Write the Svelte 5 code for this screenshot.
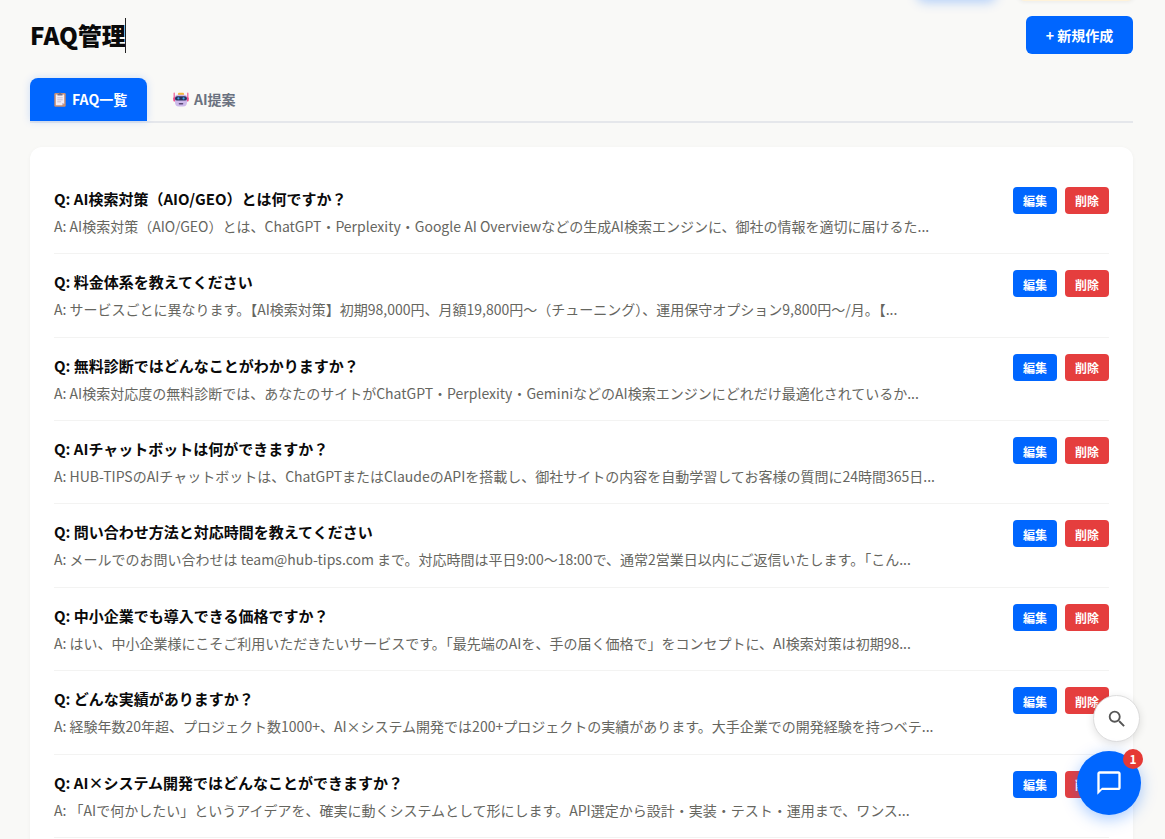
<script lang="ts">
  type Faq = {
    question: string;
    answer: string;
  };

  // State
  let activeTab = $state('list');

  const faqs: Faq[] = [
    {
      question: 'AI検索対策（AIO/GEO）とは何ですか？',
      answer: 'AI検索対策（AIO/GEO）とは、ChatGPT・Perplexity・Google AI Overviewなどの生成AI検索エンジンに、御社の情報を適切に届けるた...'
    },
    {
      question: '料金体系を教えてください',
      answer: 'サービスごとに異なります。【AI検索対策】初期98,000円、月額19,800円〜（チューニング）、運用保守オプション9,800円〜/月。【...'
    },
    {
      question: '無料診断ではどんなことがわかりますか？',
      answer: 'AI検索対応度の無料診断では、あなたのサイトがChatGPT・Perplexity・GeminiなどのAI検索エンジンにどれだけ最適化されているか...'
    },
    {
      question: 'AIチャットボットは何ができますか？',
      answer: 'HUB-TIPSのAIチャットボットは、ChatGPTまたはClaudeのAPIを搭載し、御社サイトの内容を自動学習してお客様の質問に24時間365日...'
    },
    {
      question: '問い合わせ方法と対応時間を教えてください',
      answer: 'メールでのお問い合わせは team@hub-tips.com まで。対応時間は平日9:00〜18:00で、通常2営業日以内にご返信いたします。「こん...'
    },
    {
      question: '中小企業でも導入できる価格ですか？',
      answer: 'はい、中小企業様にこそご利用いただきたいサービスです。「最先端のAIを、手の届く価格で」をコンセプトに、AI検索対策は初期98...'
    },
    {
      question: 'どんな実績がありますか？',
      answer: '経験年数20年超、プロジェクト数1000+、AI×システム開発では200+プロジェクトの実績があります。大手企業での開発経験を持つベテ...'
    },
    {
      question: 'AI×システム開発ではどんなことができますか？',
      answer: '「AIで何かしたい」というアイデアを、確実に動くシステムとして形にします。API選定から設計・実装・テスト・運用まで、ワンス...'
    }
  ];
</script>

<div class="page">
  <div class="nav-edge nav-active"></div>
  <div class="nav-edge nav-notice"></div>

  <header class="header">
    <h1 class="title">FAQ管理<span class="caret"></span></h1>
    <button class="create">+ 新規作成</button>
  </header>

  <div class="tabs">
    <button class="tab" class:active={activeTab === 'list'} onclick={() => (activeTab = 'list')}>
      <svg class="clipboard" viewBox="0 0 12 15" width="12" height="15" aria-hidden="true">
        <rect x="0.3" y="1" width="11.4" height="13.8" rx="1.2" fill="#c98f72" />
        <path d="M1.8 2.5h8.4v8.8l-2 2H1.8z" fill="#f3eef8" />
        <path d="M10.2 11.3h-2v2z" fill="#b9a8c4" />
        <path d="M3.5 3.4V1.7h1.4a1.1 1.1 0 0 1 2.2 0h1.4v1.7z" fill="#766f86" />
        <path d="M3.3 5.8h5.4M3.3 7.8h5.4M3.3 9.8h3.8" stroke="#bdb3ca" stroke-width="0.8" />
      </svg>
      <span>FAQ一覧</span>
    </button>
    <button class="tab" class:active={activeTab === 'ai'} onclick={() => (activeTab = 'ai')}>
      <svg class="robot" viewBox="0 0 16 15" width="16" height="15" aria-hidden="true">
        <path d="M1.2 1.2v6M14.8 1.2v6" stroke="#f0669b" stroke-width="1.3" stroke-linecap="round" />
        <rect x="0.3" y="5.2" width="2.5" height="4.4" rx="1" fill="#ed4b8b" />
        <rect x="13.2" y="5.2" width="2.5" height="4.4" rx="1" fill="#ed4b8b" />
        <rect x="5" y="0.7" width="6" height="3" rx="1" fill="#f5b83d" />
        <path d="M4 2.8h8q2 0 2 2.5v5q0 4.2-4 4.2H6q-4 0-4-4.2v-5q0-2.5 2-2.5z" fill="#cdb9ea" />
        <rect x="2" y="4.2" width="12" height="4.4" rx="2.2" fill="#29315c" />
        <circle cx="5.4" cy="6.4" r="1.1" fill="#3da9e8" />
        <circle cx="10.6" cy="6.4" r="1.1" fill="#3da9e8" />
        <rect x="5.7" y="11" width="4.6" height="1.5" rx="0.7" fill="#5c4a78" />
      </svg>
      <span>AI提案</span>
    </button>
  </div>

  <div class="card">
    {#each faqs as faq}
      <div class="item">
        <div class="content">
          <div class="question">Q: {faq.question}</div>
          <div class="answer">A: {faq.answer}</div>
        </div>
        <div class="actions">
          <button class="action edit">編集</button>
          <button class="action delete">削除</button>
        </div>
      </div>
    {/each}
  </div>

  <button class="search" aria-label="検索">
    <svg viewBox="0 0 24 24" width="22" height="22" fill="#555">
      <path d="M15.5 14h-.79l-.28-.27A6.47 6.47 0 0 0 16 9.5 6.5 6.5 0 1 0 9.5 16c1.61 0 3.09-.59 4.23-1.57l.27.28v.79l5 4.99L20.49 19l-4.99-5zm-6 0C7.01 14 5 11.99 5 9.5S7.01 5 9.5 5 14 7.01 14 9.5 11.99 14 9.5 14z" />
    </svg>
  </button>
  <button class="chat" aria-label="チャット">
    <svg viewBox="0 0 24 24" width="28" height="28" fill="#fff">
      <path d="M20 2H4c-1.1 0-2 .9-2 2v18l4-4h14c1.1 0 2-.9 2-2V4c0-1.1-.9-2-2-2zm0 14H6l-2 2V4h16v12z" />
    </svg>
    <span class="badge">1</span>
  </button>
</div>

<style>
  :global(body) { background: #f9f9f7; }
  .page { position: relative; box-sizing: border-box; height: 839px; padding: 16px 32px 0 30px; overflow: hidden; font-family: "Noto Sans CJK JP", "Noto Sans", sans-serif; color: #111; background: #f9f9f7; }
  button { padding: 0; border: none; font-family: inherit; cursor: pointer; }

  .nav-edge { position: absolute; height: 30px; border-radius: 8px; }
  .nav-active { top: -32px; left: 917px; width: 79px; background: #0066ff; box-shadow: 0 4px 12px rgba(0, 102, 255, 0.3); }
  .nav-notice { top: -29px; left: 1017px; width: 118px; background: #fff3da; box-shadow: 0 1px 4px rgba(0, 0, 0, 0.06); }

  .header { display: flex; justify-content: space-between; align-items: flex-start; height: 62px; }
  .title { display: flex; align-items: center; height: 38px; margin: 0; font-size: 24px; font-weight: 800; line-height: 38px; color: #0a0a0a; }
  .caret { width: 1px; height: 35px; margin-left: -1px; background: #222; }
  .create { width: 107px; height: 38px; border-radius: 6px; background: #0066ff; color: #fff; font-size: 14px; font-weight: 700; }

  .tabs { display: flex; gap: 4px; height: 43px; border-bottom: 2px solid #e5e7eb; }
  .tab { display: flex; align-items: center; gap: 5px; box-sizing: border-box; height: 43px; padding: 0 20px 0 22px; border-radius: 8px 8px 0 0; background: transparent; color: #6b7280; font-size: 14px; font-weight: 600; line-height: 21px; }
  .tab span { margin-bottom: 1px; }
  .tab.active { gap: 6px; width: 117px; padding: 0 0 0 24px; background: #0066ff; color: #fff; font-weight: 700; box-shadow: 0 0 8px rgba(0, 102, 255, 0.18); }

  .card { margin-top: 24px; padding: 23.9px 24px; border-radius: 12px; background: #fff; box-shadow: 0 1px 4px rgba(0, 0, 0, 0.04); }
  .item { display: flex; justify-content: space-between; align-items: flex-start; box-sizing: border-box; height: 83.4px; padding-top: 16px; border-bottom: 1px solid #f3f3f2; }
  .content { white-space: nowrap; }
  .question { margin-bottom: 5px; font-size: 15px; font-weight: 700; line-height: 23px; color: #0a0a0a; }
  .answer { font-size: 14px; line-height: 23px; color: #66665f; }
  .actions { display: flex; gap: 8px; }
  .action { width: 44px; height: 27px; padding-top: 1px; border-radius: 4px; color: #fff; font-size: 12px; font-weight: 700; }
  .edit { background: #0066ff; }
  .delete { background: #e53e3e; }

  .search { position: absolute; top: 695px; left: 1093px; display: flex; align-items: center; justify-content: center; width: 47px; height: 47px; border: 1px solid #ddd; border-radius: 50%; background: #fff; box-shadow: 0 2px 8px rgba(0, 0, 0, 0.12); }
  .chat { position: absolute; top: 751px; left: 1077px; display: flex; align-items: center; justify-content: center; width: 64px; height: 64px; border-radius: 50%; background: #0066ff; box-shadow: 0 4px 16px rgba(0, 102, 255, 0.35); }
  .badge { position: absolute; top: -2px; right: -2px; width: 20px; height: 20px; border-radius: 50%; background: #e53935; color: #fff; font-size: 12px; font-weight: 700; line-height: 20px; text-align: center; }
</style>
